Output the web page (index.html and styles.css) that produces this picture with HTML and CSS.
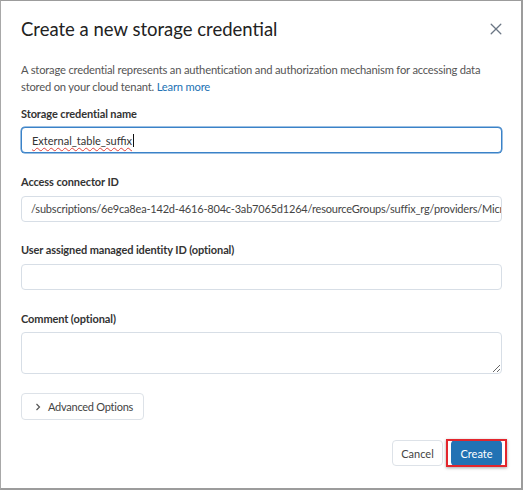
FILE: index.html
```html
<!DOCTYPE html>
<html lang="en">
<head>
<meta charset="utf-8">
<title>Create a new storage credential</title>
<link rel="stylesheet" href="styles.css">
</head>
<body>
<div class="dialog">
  <div class="header">
    <h1 class="title">Create a new storage credential</h1>
    <button class="close" aria-label="Close">
      <svg width="12" height="12" viewBox="0 0 12 12"><path d="M1.2 1.2 L10.8 10.8 M10.8 1.2 L1.2 10.8" stroke="#6b7684" stroke-width="1.3" fill="none" stroke-linecap="round"/></svg>
    </button>
  </div>
  <p class="desc">A storage credential represents an authentication and authorization mechanism for accessing data stored on your cloud tenant. <a class="link" href="#">Learn more</a></p>

  <div class="field field-first">
    <label class="label">Storage credential name</label>
    <div class="input input-focused"><span class="spell">External_table_suffix</span><span class="caret"></span></div>
  </div>

  <div class="field">
    <label class="label">Access connector ID</label>
    <div class="input"><span class="value">/subscriptions/6e9ca8ea-142d-4616-804c-3ab7065d1264/resourceGroups/suffix_rg/providers/Microsoft.Databricks/accessConnectors/suffix_connector</span></div>
  </div>

  <div class="field">
    <label class="label">User assigned managed identity ID (optional)</label>
    <input class="input" type="text">
  </div>

  <div class="field">
    <label class="label">Comment (optional)</label>
    <textarea class="textarea"></textarea>
  </div>

  <button class="advanced">
    <svg width="6" height="8" viewBox="0 0 6 8"><path d="M1.5 1 L4.5 4 L1.5 7" stroke="#555" stroke-width="1.2" fill="none"/></svg>
    <span>Advanced Options</span>
  </button>

  <div class="footer">
    <button class="btn">Cancel</button>
    <button class="btn btn-primary">Create</button>
  </div>
</div>
</body>
</html>
```

FILE: styles.css
```css
* { box-sizing: border-box; }

html, body {
  margin: 0;
  padding: 0;
  background: #ffffff;
}

body {
  font-family: "Lato", "Open Sans", sans-serif;
  font-size: 11px;
  color: #333;
}

.dialog {
  width: 523px;
  height: 490px;
  border-top: 1px solid #9c9c9c;
  border-left: 1px solid #a8a8a8;
  border-right: 2px solid #9c9c9c;
  border-bottom: 2px solid #9c9c9c;
  padding: 16px 19px 0 20px;
  background: #fff;
}

.header {
  display: flex;
  align-items: center;
  justify-content: space-between;
  height: 24px;
}

.title {
  margin: 0;
  font-size: 18.5px;
  line-height: 24px;
  font-weight: 400;
  color: #222;
}

.close {
  border: 0;
  background: none;
  padding: 0;
  width: 12px;
  height: 12px;
  display: flex;
}

.desc {
  margin: 20px 0 0;
  max-width: 476px;
  font-size: 11.2px;
  line-height: 17px;
  letter-spacing: -0.19px;
  color: #555;
}

.link {
  color: #2272b4;
  text-decoration: none;
}

.field {
  display: flex;
  flex-direction: column;
  margin-top: 19.7px;
}

.field-first {
  margin-top: 9.6px;
}

.label {
  line-height: 17px;
  font-weight: 700;
  letter-spacing: -0.1px;
  color: #333;
  margin-bottom: 5.7px;
}

.input {
  display: flex;
  align-items: center;
  height: 26px;
  width: 100%;
  border: 1px solid #d7dee6;
  border-radius: 4px;
  padding: 0 0 0 9px;
  font-family: inherit;
  font-size: 11px;
  color: #444;
  background: #fff;
  overflow: hidden;
  white-space: nowrap;
}

.input-focused {
  border-color: #3a82c8;
  box-shadow: 0 0 0 0.5px #3a82c8;
  padding-left: 10px;
}

.spell {
  color: #333;
  text-decoration: underline wavy #e0403a;
  text-decoration-thickness: 1px;
  text-underline-offset: 2px;
}

.caret {
  display: inline-block;
  width: 1px;
  height: 13px;
  background: #111;
  margin-left: 1px;
}

.value {
  color: #444;
  letter-spacing: -0.2px;
}

.textarea {
  height: 42px;
  width: 100%;
  border: 1px solid #d7dee6;
  border-radius: 4px;
  resize: vertical;
  font-family: inherit;
  font-size: 11px;
  padding: 6px 9px;
  display: block;
}

.advanced {
  margin-top: 19px;
  display: flex;
  align-items: center;
  height: 27px;
  padding: 0 10px 0 13px;
  border: 1px solid #dde2e8;
  border-radius: 4px;
  background: #fff;
  font-family: inherit;
  font-size: 11px;
  letter-spacing: -0.25px;
  color: #444;
  gap: 7px;
}

.footer {
  display: flex;
  justify-content: flex-end;
  gap: 8px;
  margin-top: 20px;
}

.btn {
  position: relative;
  width: 51px;
  height: 26px;
  padding: 0;
  border: 1px solid #dde2e8;
  border-radius: 4px;
  background: #fff;
  font-family: inherit;
  font-size: 11px;
  color: #444;
  text-align: center;
}

.btn-primary {
  background: #2272b4;
  border-color: #2272b4;
  color: #fff;
}

.btn-primary::after {
  content: "";
  position: absolute;
  top: -2px;
  bottom: -2px;
  left: -6px;
  right: -6px;
  border: 2px solid #e3262d;
  box-shadow: 0 1px 3px rgba(0, 0, 0, 0.35);
  pointer-events: none;
}
```
